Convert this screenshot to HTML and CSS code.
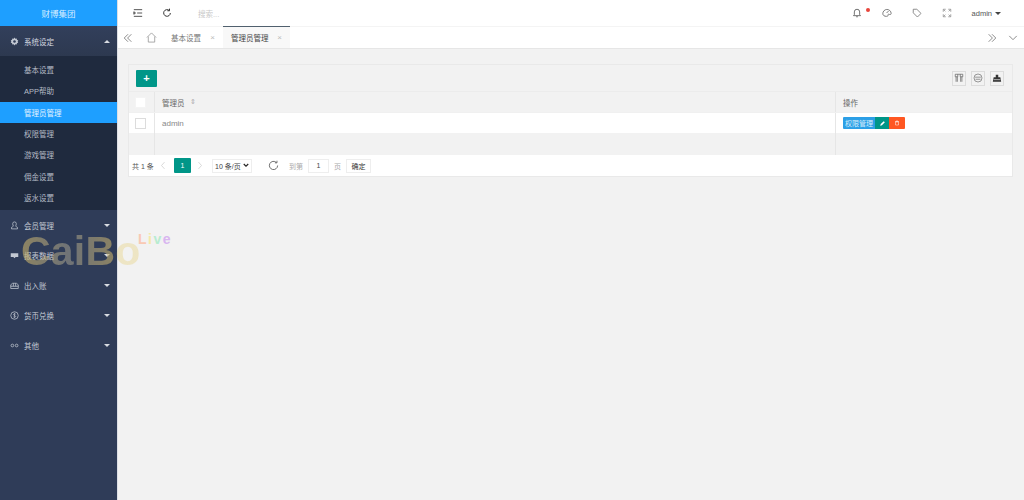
FILE: index.html
```html
<!DOCTYPE html>
<html lang="zh">
<head>
<meta charset="utf-8">
<title>管理员管理</title>
<link rel="stylesheet" href="styles.css">
</head>
<body>
<div class="app">
  <aside class="side">
    <div class="logo">财博集团</div>
    <div class="menu-item open">
      <svg class="mi" viewBox="0 0 12 12"><path d="M6 .8l1.100 1.500 1.800-.3.4 1.800 1.700.9-.8 1.300.8 1.300-1.700.9-.4 1.800-1.800-.3L6 11.200 4.900 9.700l-1.800.3-.4-1.800L1 7.300 1.800 6 1 4.700l1.700-.9.4-1.800 1.800.3z" fill="#c2c8d2"/><circle cx="6" cy="6" r="1.700" fill="#2f3c58"/></svg>
      <span>系统设定</span><i class="caret up"></i>
    </div>
    <div class="sub">
      <a>基本设置</a>
      <a>APP帮助</a>
      <a class="on">管理员管理</a>
      <a>权限管理</a>
      <a>游戏管理</a>
      <a>佣金设置</a>
      <a>返水设置</a>
    </div>
    <div class="menu-item">
      <svg class="mi" viewBox="0 0 12 12"><path d="M6 1.200a2.400 2.400 0 0 1 2.400 2.400c0 1.500-.5 2.600-1 3.200.2.6 2 1 2.600 1.800v1.900H2V8.600c.6-.8 2.400-1.200 2.600-1.800-.5-.6-1-1.700-1-3.200A2.400 2.400 0 0 1 6 1.200z" fill="none" stroke="#c2c8d2"/></svg>
      <span>会员管理</span><i class="caret"></i>
    </div>
    <div class="menu-item">
      <svg class="mi" viewBox="0 0 12 12"><path d="M1 3h10v5H7.500L6 9.500 4.500 8H1z" fill="#c2c8d2"/></svg>
      <span>报表数据</span><i class="caret"></i>
    </div>
    <div class="menu-item">
      <svg class="mi" viewBox="0 0 12 12"><path d="M1 10V5l2.500-2h5L11 5v5zM1 7h10M4.500 3v4M7.500 3v4" fill="none" stroke="#c2c8d2"/></svg>
      <span>出入账</span><i class="caret"></i>
    </div>
    <div class="menu-item">
      <svg class="mi" viewBox="0 0 12 12"><circle cx="6" cy="6" r="5" fill="none" stroke="#c2c8d2"/><path d="M7.600 4.300C7 3.500 4.600 3.500 4.600 4.800S7.600 6 7.600 7.300 5 8.500 4.400 7.700M6 2.500v7" fill="none" stroke="#c2c8d2" stroke-width=".8"/></svg>
      <span>货币兑换</span><i class="caret"></i>
    </div>
    <div class="menu-item">
      <svg class="mi" viewBox="0 0 12 12"><circle cx="3.200" cy="6" r="1.800" fill="none" stroke="#c2c8d2"/><circle cx="8.800" cy="6" r="1.800" fill="none" stroke="#c2c8d2"/></svg>
      <span>其他</span><i class="caret"></i>
    </div>
  </aside>
  <div class="main">
    <header class="top">
      <div class="top-left">
        <svg class="ti" viewBox="0 0 12 12"><path d="M1 2h10M5 6h6M1 10h10M1 4.500L3 6 1 7.500z" fill="none" stroke="#333"/></svg>
        <svg class="ti" viewBox="0 0 12 12"><path d="M10 6a4 4 0 1 1-1.300-3M9 .8v2.500H6.500" fill="none" stroke="#333" stroke-width="1.200"/></svg>
        <span class="search">搜索...</span>
      </div>
      <div class="top-right">
        <span class="ti-wrap">
          <svg class="ti" viewBox="0 0 12 12"><path d="M6 1.500a3.200 3.200 0 0 1 3.200 3.200V8l1 1.200H1.800L2.800 8V4.700A3.200 3.200 0 0 1 6 1.500zM5 10.500h2" fill="none" stroke="#555"/></svg>
          <i class="dot"></i>
        </span>
        <svg class="ti" viewBox="0 0 12 12"><path d="M1 7a5 5 0 0 1 10-.5c0 1.700-2 1.500-2.500 1-.7-.6-1.300.2-1.300 1.500 0 1-1.200 1-2 1C3 10 1 9 1 7zM5.500 6L8 3.500" fill="none" stroke="#666"/></svg>
        <svg class="ti" viewBox="0 0 12 12"><path d="M1.500 1.500h4.300l5 5-4.300 4.300-5-5zM3.800 3.800h.1" fill="none" stroke="#777"/></svg>
        <svg class="ti" viewBox="0 0 12 12"><path d="M1.500 4.500v-3h3M7.500 1.500h3v3M10.500 7.500v3h-3M4.500 10.500h-3v-3M2 2l2 2M10 2L8 4M10 10L8 8M2 10l2-2" fill="none" stroke="#888" stroke-width=".9"/></svg>
        <span class="user">admin<i class="caret dark"></i></span>
      </div>
    </header>
    <nav class="tabs">
      <svg class="tab-i" viewBox="0 0 12 12"><path d="M6 1.500L1.500 6 6 10.500M10 1.500L5.500 6l4.500 4.500" fill="none" stroke="#666" stroke-width=".9"/></svg>
      <svg class="tab-home" viewBox="0 0 12 12"><path d="M1 6l5-5 5 5M2.500 5v6h7V5" fill="none" stroke="#999" stroke-width=".9"/></svg>
      <span class="tab first">基本设置<b>×</b></span>
      <span class="tab cur">管理员管理<b>×</b></span>
      <span class="tab-fill"></span>
      <svg class="tab-i" viewBox="0 0 12 12"><path d="M2 1.500L6.500 6 2 10.500M6 1.500L10.500 6 6 10.500" fill="none" stroke="#666" stroke-width=".9"/></svg>
      <svg class="tab-i last" viewBox="0 0 12 12"><path d="M1.500 3.500L6 8l4.500-4.500" fill="none" stroke="#666" stroke-width=".9"/></svg>
    </nav>
    <main class="content">
      <section class="card">
        <div class="toolbar">
          <button class="add">+</button>
          <div class="tools">
            <span class="tool"><svg viewBox="0 0 12 12"><path d="M1.500 1.500h9M1.500 1.500v3h3v-3M7.500 1.500v3h3v-3M2.500 4.500v6M4 4.500v6M8 4.500v6M9.500 4.500v6" fill="none" stroke="#666" stroke-width=".9"/></svg></span>
            <span class="tool"><svg viewBox="0 0 12 12"><circle cx="6" cy="6" r="4.800" fill="none" stroke="#777" stroke-width=".9"/><path d="M2.500 5h7M3 7.500h6" stroke="#777" stroke-width=".9"/></svg></span>
            <span class="tool"><svg viewBox="0 0 12 12"><path d="M4.500 2h3v3h2.500l1 5.500H1L2 5h2.500z" fill="#333"/><path d="M2 8h8" stroke="#eee" stroke-width=".8"/></svg></span>
          </div>
        </div>
        <div class="row head">
          <span class="c-check"><i class="box solid"></i></span>
          <span class="c-name">管理员<em class="sort">⇕</em></span>
          <span class="c-op">操作</span>
        </div>
        <div class="row body">
          <span class="c-check"><i class="box"></i></span>
          <span class="c-name name-val">admin</span>
          <span class="c-op">
            <span class="btns">
              <a class="b-blue">权限管理</a>
              <a class="b-green"><svg viewBox="0 0 12 12"><path d="M2 10l1-3 5-5 2 2-5 5z" fill="#fff"/></svg></a>
              <a class="b-orange"><svg viewBox="0 0 12 12"><path d="M2 3h8M4 3V2h4v1M3 4h6v6H3z" fill="none" stroke="#fff"/></svg></a>
            </span>
          </span>
        </div>
        <div class="row empty">
          <span class="c-check"></span>
          <span class="c-name"></span>
          <span class="c-op"></span>
        </div>
        <div class="pager">
          <span class="total">共 1 条</span>
          <svg class="arrow" viewBox="0 0 8 12"><path d="M6 1.500L2 6l4 4.500" fill="none" stroke="#ccc"/></svg>
          <span class="page">1</span>
          <svg class="arrow" viewBox="0 0 8 12"><path d="M2 1.500L6 6l-4 4.500" fill="none" stroke="#ccc"/></svg>
          <span class="size">10 条/页<svg viewBox="0 0 8 6"><path d="M1 1l3 3 3-3" fill="none" stroke="#222" stroke-width="1.500"/></svg></span>
          <svg class="reload" viewBox="0 0 12 12"><path d="M10.500 6a4.500 4.500 0 1 1-1.400-3.300M9.800 .8v2.300H7.500" fill="none" stroke="#555" stroke-width=".9"/></svg>
          <span class="muted">到第</span>
          <span class="jump">1</span>
          <span class="muted">页</span>
          <span class="ok">确定</span>
        </div>
      </section>
    </main>
  </div>
  <div class="mark"><span class="cb">CaiBo</span><span class="live"><i class="l1">L</i><i class="l2">i</i><i class="l3">v</i><i class="l4">e</i></span></div>
</div>
</body>
</html>
```
FILE: styles.css
```css
* { box-sizing: border-box; }
html, body { margin: 0; height: 100%; }
body { font-family: "Liberation Sans", "Noto Sans CJK SC", sans-serif; font-size: 7.5px; color: #666; background: #f2f2f2; overflow: hidden; }
.app { display: flex; width: 1024px; height: 500px; position: relative; }
.side { width: 117px; flex: none; background: #2f3c58; color: #c2c8d2; }
.logo { height: 26px; background: #1e9fff; color: #d8eeff; font-size: 8.5px; display: flex; align-items: center; justify-content: center; }
.menu-item { height: 30px; display: flex; align-items: center; padding: 0 7px 0 10px; }
.menu-item span { margin-left: 5px; flex: 1; }
.menu-item.open { background: linear-gradient(#323f5b, #2d3950); color: #d5d9e0; }
.mi { width: 9px; height: 9px; }
.caret { width: 0; height: 0; border: 3.5px solid transparent; border-top: 3.5px solid #d8dce2; border-bottom: 0; }
.caret.up { border-top: 0; border-bottom: 3.5px solid #d8dce2; }
.caret.dark { display: inline-block; border-width: 3px 3px 0; border-top-color: #444; margin-left: 3px; vertical-align: 1px; }
.sub { background: #1f2a3e; height: 154px; padding-top: 3px; }
.sub a { display: flex; align-items: center; height: 21.3px; padding-left: 24px; color: #b4bac5; }
.sub a.on { background: #1e9fff; color: #e4f3ff; }
.main { flex: 1; display: flex; flex-direction: column; min-width: 0; border-left: 1px solid #dcdfe5; }
.top { height: 26px; flex: none; background: #fff; display: flex; justify-content: space-between; align-items: center; padding: 0 23px 0 15px; }
.top-left { display: flex; align-items: center; gap: 19px; }
.search { color: #c8c8c8; margin-left: 7px; }
.top-right { display: flex; align-items: center; gap: 20px; }
.ti { width: 10px; height: 10px; display: block; }
.ti-wrap { position: relative; }
.dot { position: absolute; width: 4px; height: 4px; border-radius: 50%; background: #e8453c; top: 0; left: 14px; }
.user { color: #555; font-size: 7.5px; }
.tabs { height: 23px; flex: none; background: #fff; border-bottom: 1px solid #e6e6e6; display: flex; align-items: stretch; border-top: 1px solid #f4f4f4; color: #666; }
.tab-i { width: 10px; height: 10px; align-self: center; margin: 0 5px; }
.tab-i.last { margin-right: 6px; margin-left: 6px; }
.tab-home { width: 11px; height: 11px; align-self: center; margin: 0 6px 0 8px; }
.tab { display: flex; align-items: center; padding: 0 8px; width: 67px; justify-content: space-between; color: #777; }
.tab.first { width: 60px; }
.tab b { font-weight: normal; color: #bbb; font-size: 8px; }
.tab.cur { background: #f8f8f8; border-top: 1px solid #50606e; color: #444; margin-top: -1px; }
.tab-fill { flex: 1; }
.content { flex: 1; padding: 15px 10px 0 10px; background: #f2f2f2; }
.card { border: 1px solid #e9e9e9; background: #f2f2f2; width: 885px; }
.toolbar { height: 27px; display: flex; justify-content: space-between; align-items: center; padding: 0 8px 0 7px; border-bottom: 1px solid #ececec; }
.add { width: 21px; height: 17px; border: 0; border-radius: 1px; background: #009688; color: #fff; font: bold 11px/17px "Liberation Sans", sans-serif; padding: 0; }
.tools { display: flex; gap: 5px; }
.tool { width: 14px; height: 15px; border: 1px solid #dcdcdc; display: flex; align-items: center; justify-content: center; }
.tool svg { width: 10px; height: 10px; }
.row { display: grid; grid-template-columns: 26px 681px 1fr; align-items: stretch; }
.row > span { display: flex; align-items: center; border-right: 1px solid #e6e6e6; }
.row > span:last-child { border-right: 0; }
.head { height: 21px; background: #f2f2f2; border-bottom: 1px solid #f0f0f0; }
.body { height: 20px; background: #fff; }
.empty { height: 22px; background: #f2f2f2; }
.c-check { justify-content: center; padding-right: 2px; }
.c-name { padding-left: 7px; }
.name-val { font-size: 8px; color: #888; }
.c-op { padding-left: 7px; }
.box { width: 11px; height: 11px; border: 1px solid #dcdcdc; background: #fff; display: block; }
.box.solid { border-color: #f4f4f4; }
.sort { font-style: normal; color: #aaa; margin-left: 5px; font-size: 7px; }
.btns { display: flex; height: 12px; }
.btns a { display: flex; align-items: center; justify-content: center; color: #d8eefc; font-size: 7px; height: 12px; }
.b-blue { width: 32px; background: #2c9fe6; border-radius: 1px 0 0 1px; }
.b-green { width: 14px; background: #009688; }
.b-green svg { width: 7px; height: 7px; }
.b-orange { width: 16px; background: #ff5722; border-radius: 0 1px 1px 0; }
.b-orange svg { width: 6px; height: 6px; }
.pager { height: 21px; background: #fff; display: flex; align-items: center; padding-left: 3px; color: #555; font-size: 7px; }
.total { width: 21px; white-space: nowrap; }
.arrow { width: 6px; height: 9px; margin: 0 9px 0 7px; }
.page { width: 17px; height: 15px; background: #009688; color: #fff; display: flex; align-items: center; justify-content: center; border-radius: 1px; margin: 0 -1px; }
.size { width: 40px; height: 14px; border: 1px solid #eee; background: #fff; color: #444; padding: 0 2px; display: flex; align-items: center; justify-content: space-between; white-space: nowrap; }
.size svg { width: 6px; height: 5px; }
.reload { width: 11px; height: 11px; margin: 0 10px 0 16px; }
.muted { color: #aaa; }
.jump { width: 21px; height: 14px; border: 1px solid #eee; margin: 0 5px; display: flex; align-items: center; justify-content: center; color: #444; }
.ok { width: 25px; height: 14px; border: 1px solid #eee; margin-left: 5px; display: flex; align-items: center; justify-content: center; color: #333; }
.mark { position: absolute; left: 21px; top: 226px; width: 155px; height: 50px; pointer-events: none; }
.cb { position: absolute; left: 0; top: 0; font: bold 41px/50px "Liberation Sans", sans-serif; letter-spacing: .2px; background: linear-gradient(90deg, rgba(205,180,105,.6) 0, rgba(175,170,150,.5) 40%, rgba(205,180,105,.6) 81%, rgba(232,215,150,.5) 81%); -webkit-background-clip: text; background-clip: text; color: transparent; }
.live { position: absolute; left: 117px; top: 5px; font: bold 14px/16px "Liberation Sans", sans-serif; letter-spacing: 1.5px; }
.live i { font-style: normal; }
.l1 { color: #f9c9b4; }
.l2 { color: #f5e9a8; }
.l3 { color: #b8ecd0; }
.l4 { color: #d9b6f0; }
```
